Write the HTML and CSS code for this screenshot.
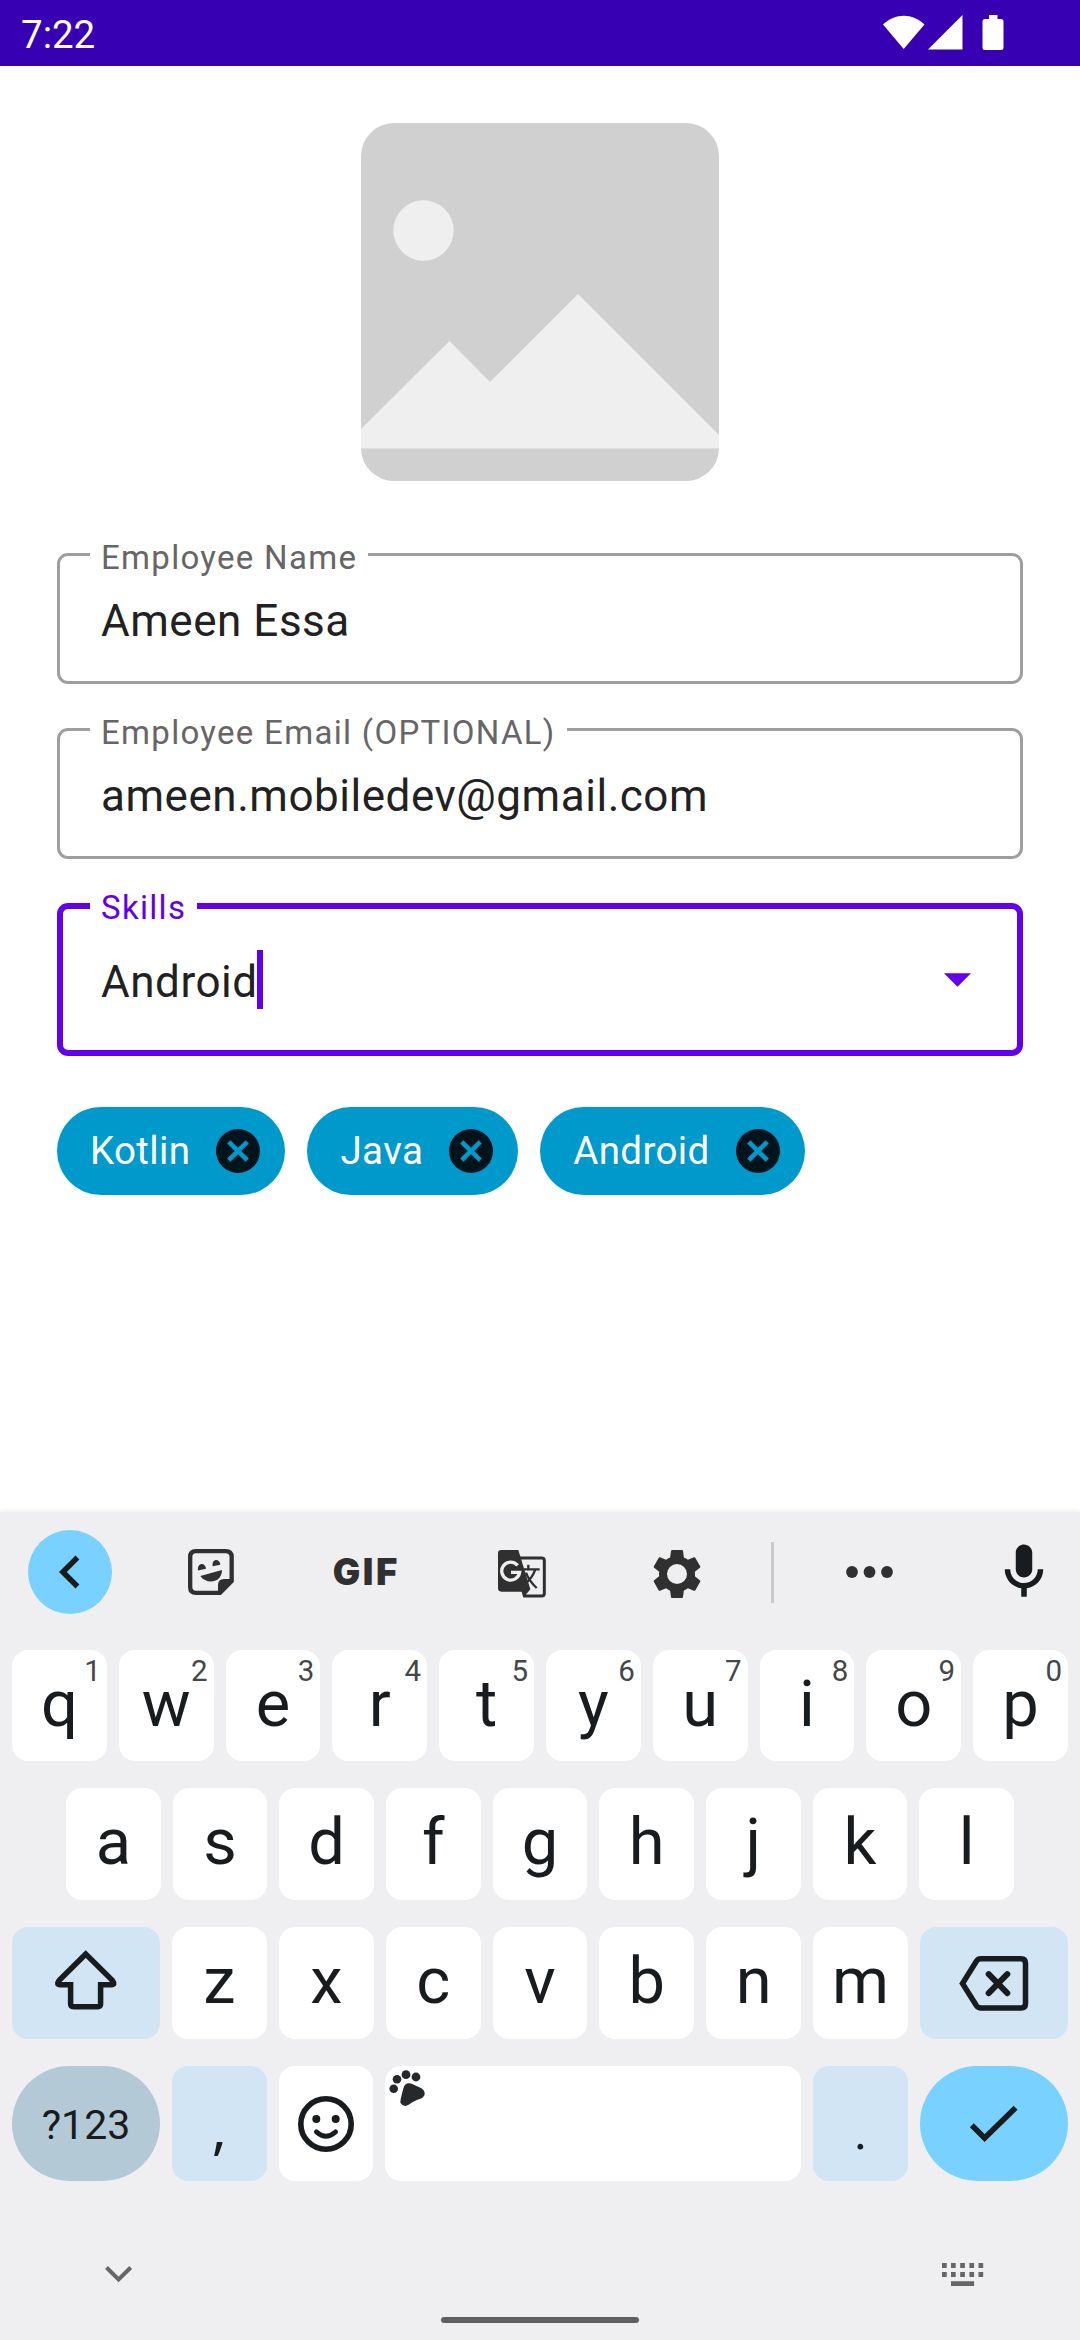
FILE: index.html
```html
<!DOCTYPE html>
<html lang="en">
<head>
<meta charset="utf-8">
<title>Employee</title>
<link rel="stylesheet" href="styles.css">
</head>
<body>
<header class="status-bar">
  <span class="clock">7:22</span>
  <svg class="status-icons" viewBox="0 0 122 38" width="122" height="38" fill="#fff">
    <path d="M0 10.5C12 -1.2 29.5 -1.2 41.5 10.5L20.7 35z"/>
    <path d="M79.5 1v34.5H45z"/>
    <path d="M106 1h8.5v4h3.5a2.5 2.5 0 0 1 2.5 2.5v26a2.5 2.5 0 0 1-2.5 2.5h-16a2.5 2.5 0 0 1-2.5-2.5v-26a2.5 2.5 0 0 1 2.5-2.5h4z"/>
  </svg>
</header>

<main class="form">
  <svg class="photo" viewBox="0 0 358 358" width="358" height="358">
    <rect width="358" height="358" fill="#d0d0d0"/>
    <circle cx="62.5" cy="107.5" r="30.2" fill="#efefef"/>
    <path d="M0 306L88.5 218 129 259 217 171 358 312v13.5H0z" fill="#efefef"/>
  </svg>

  <div class="fields">
    <div class="field">
      <label class="field-label">Employee Name</label>
      <span class="field-value">Ameen Essa</span>
    </div>
    <div class="field">
      <label class="field-label">Employee Email (OPTIONAL)</label>
      <span class="field-value">ameen.mobiledev@gmail.com</span>
    </div>
    <div class="field focused">
      <label class="field-label">Skills</label>
      <span class="field-value">Android</span>
      <span class="caret"></span>
      <svg class="dropdown" viewBox="0 0 27 14" width="27" height="14"><path d="M0 .3h27L13.5 13.8z" fill="#6200ee"/></svg>
    </div>
  </div>

  <div class="chips">
    <span class="chip">Kotlin
      <svg viewBox="2 2 20 20" width="44" height="44"><circle cx="12" cy="12" r="10" fill="#02141b"/><path d="M7.8 7.8l8.4 8.4M16.2 7.8l-8.4 8.4" stroke="#0099cc" stroke-width="2.1"/></svg>
    </span>
    <span class="chip">Java
      <svg viewBox="2 2 20 20" width="44" height="44"><circle cx="12" cy="12" r="10" fill="#02141b"/><path d="M7.8 7.8l8.4 8.4M16.2 7.8l-8.4 8.4" stroke="#0099cc" stroke-width="2.1"/></svg>
    </span>
    <span class="chip">Android
      <svg viewBox="2 2 20 20" width="44" height="44"><circle cx="12" cy="12" r="10" fill="#02141b"/><path d="M7.8 7.8l8.4 8.4M16.2 7.8l-8.4 8.4" stroke="#0099cc" stroke-width="2.1"/></svg>
    </span>
  </div>
</main>

<section class="keyboard">
  <div class="toolbar">
    <span class="back"><svg viewBox="0 0 24 24" width="66" height="66"><path d="M15.41 7.41L14 6l-6 6 6 6 1.41-1.41L10.83 12z" fill="#191c1e"/></svg></span>
    <span class="tool">
      <svg viewBox="54 57 138 138" width="46" height="46" fill="#303030">
        <path d="M78 63.5H167Q185 63.5 185 81V153L150 188.5H78Q60.5 188.5 60.5 171V81Q60.5 63.5 78 63.5z" fill="none" stroke="#303030" stroke-width="13"/>
        <path d="M144 192V165Q144 147 162 147H190z"/>
        <path d="M84 121.5C80 98 106 95 108 116z"/>
        <path d="M128 109C124 86 149 84 151 104z"/>
        <path d="M91 138L156 120C156 160 108 164 91 138z"/>
      </svg>
    </span>
    <span class="tool gif">GIF</span>
    <span class="tool low">
      <svg viewBox="57 60 144 144" width="48" height="48">
        <path d="M120 84H188Q196 84 196 92V190Q196 198 188 198H135" fill="none" stroke="#303030" stroke-width="9"/>
        <path d="M67 60H118L154 178L133 203L128 185H67Q57 185 57 175V70Q57 60 67 60z" fill="#303030"/>
        <path d="M116 106A27 27 0 1 0 122 127H96" fill="none" stroke="#efeff1" stroke-width="10"/>
        <path d="M132 118H182M148 104V118M169 118Q160 145 137 162M141 128Q150 153 173 174" fill="none" stroke="#303030" stroke-width="7"/>
      </svg>
    </span>
    <span class="tool low">
      <svg viewBox="0 0 24 24" width="60" height="60"><path d="M19.14 12.94c.04-.3.06-.61.06-.94 0-.32-.02-.64-.07-.94l2.03-1.58c.18-.14.23-.41.12-.61l-1.92-3.32c-.12-.22-.37-.29-.59-.22l-2.39.96c-.5-.38-1.03-.7-1.62-.94L14.4 2.81c-.04-.24-.24-.41-.48-.41h-3.84c-.24 0-.43.17-.47.41L9.25 5.35C8.66 5.59 8.12 5.92 7.63 6.29L5.24 5.33c-.22-.08-.47 0-.59.22L2.74 8.87C2.62 9.08 2.66 9.34 2.86 9.48l2.03 1.58C4.84 11.36 4.8 11.69 4.8 12s.02.64.07.94l-2.03 1.58c-.18.14-.23.41-.12.61l1.92 3.32c.12.22.37.29.59.22l2.39-.96c.5.38 1.03.7 1.62.94l.36 2.54c.05.24.24.41.48.41h3.84c.24 0 .44-.17.47-.41l.36-2.54c.59-.24 1.13-.56 1.62-.94l2.39.96c.22.08.47 0 .59-.22l1.92-3.32c.12-.22.07-.47-.12-.61L19.14 12.94z" fill="#303030"/><circle cx="12" cy="12" r="4" fill="#efeff1"/></svg>
    </span>
    <span class="tool-divider"></span>
    <span class="more"><svg viewBox="0 0 47 12" width="47" height="12" fill="#303030"><circle cx="6" cy="6" r="5.9"/><circle cx="23.5" cy="6" r="5.9"/><circle cx="41" cy="6" r="5.9"/></svg></span>
    <svg class="mic" viewBox="0 0 24 24" width="66" height="66"><path d="M12 14c1.66 0 3-1.34 3-3V5c0-1.66-1.34-3-3-3S9 3.34 9 5v6c0 1.66 1.34 3 3 3zm5-3c0 2.76-2.24 5-5 5s-5-2.24-5-5H5c0 3.53 2.61 6.43 6 6.92V21h2v-3.08c3.39-.49 6-3.39 6-6.92h-2z" fill="#191c1e"/></svg>
  </div>

  <div class="keys">
    <div class="row row-1">
      <span class="key">q<sup>1</sup></span><span class="key">w<sup>2</sup></span><span class="key">e<sup>3</sup></span><span class="key">r<sup>4</sup></span><span class="key">t<sup>5</sup></span><span class="key">y<sup>6</sup></span><span class="key">u<sup>7</sup></span><span class="key">i<sup>8</sup></span><span class="key">o<sup>9</sup></span><span class="key">p<sup>0</sup></span>
    </div>
    <div class="row row-2">
      <span class="key">a</span><span class="key">s</span><span class="key">d</span><span class="key">f</span><span class="key">g</span><span class="key">h</span><span class="key">j</span><span class="key">k</span><span class="key">l</span>
    </div>
    <div class="row row-3">
      <span class="key wide tinted"><svg viewBox="52 1949 68 68" width="68" height="68"><path d="M85.8 1956L59 1982.5Q56 1986.7 60 1986.7H70.6V2006Q70.6 2008.7 73.5 2008.7H97.7Q100.6 2008.7 100.6 2006V1986.7H111.5Q115.5 1986.7 112.5 1982.5z" fill="none" stroke="#191c1e" stroke-width="5.5"/></svg></span>
      <span class="key">z</span><span class="key">x</span><span class="key">c</span><span class="key">v</span><span class="key">b</span><span class="key">n</span><span class="key">m</span>
      <span class="key wide tinted"><svg viewBox="957 1949 72 68" width="72" height="68" fill="none" stroke="#191c1e"><path d="M961.500 1985.500L975.500 1963Q977 1960.800 980 1960.800H1020Q1024.500 1960.800 1024.500 1965.500V2005.500Q1024.500 2010 1020 2010H980Q977 2010 975.500 2007.800z" stroke-width="5.500"/><path d="M987.700 1976.200l18.600 19M1006.300 1976.200l-18.600 19" stroke-width="6" stroke-linecap="round"/></svg></span>
    </div>
    <div class="row row-4">
      <span class="key wide symbols">?123</span>
      <span class="key tinted comma">,</span>
      <span class="key"><svg viewBox="0 0 56 56" width="56" height="56"><circle cx="28" cy="28" r="25.2" fill="none" stroke="#191c1e" stroke-width="5.6"/><circle cx="18.3" cy="23" r="4" fill="#191c1e"/><circle cx="37.7" cy="23" r="4" fill="#191c1e"/><path d="M18.5 36Q28 44.5 37.5 36" fill="none" stroke="#191c1e" stroke-width="5" stroke-linecap="round"/></svg></span>
      <span class="key space"><svg viewBox="388 2070 37 37" width="37" height="37" fill="#26292b"><circle cx="392.7" cy="2088.7" r="4.3"/><circle cx="396" cy="2079.2" r="4.3"/><circle cx="405" cy="2074.7" r="4.4"/><circle cx="415" cy="2077" r="4.4"/><path d="M402.5 2088Q404 2082 410 2083.5L420 2088Q424.5 2091 423.5 2095Q422 2098.5 417 2099.5Q412 2101.5 408 2104.5Q403 2108 399.5 2103Q398.8 2101 402.5 2088z"/></svg></span>
      <span class="key tinted period">.</span>
      <span class="key wide enter"><svg viewBox="966 2100 56 48" width="56" height="48"><path d="M971.8 2125.3L984.6 2138 1015.6 2107.7" fill="none" stroke="#191c1e" stroke-width="5.6"/></svg></span>
    </div>
  </div>

  <div class="nav">
    <svg viewBox="105 2263 28 22" width="28" height="22"><path d="M106.5 2267.5L118.6 2279.5 130.7 2267.5" fill="none" stroke="#666" stroke-width="4"/></svg>
    <svg viewBox="0 0 42 23" width="42" height="23" fill="#666"><path d="M0 0h4.7v5H0zM9 0h4.7v5H9zM18.2 0h4.7v5h-4.7zM27.4 0h4.7v5h-4.7zM36.5 0h4.7v5h-4.7zM0 9h4.7v5H0zM9 9h4.7v5H9zM18.2 9h4.7v5h-4.7zM27.4 9h4.7v5h-4.7zM36.5 9h4.7v5h-4.7zM9 18.2h23.1V23H9z"/></svg>
  </div>
  <div class="home-bar"></div>
</section>
</body>
</html>
```
FILE: styles.css
```css
* { box-sizing: border-box; }

body {
  margin: 0;
  width: 1080px;
  height: 2340px;
  display: flex;
  flex-direction: column;
  background: #fff;
  font-family: Roboto, "Noto Sans", sans-serif;
  overflow: hidden;
}

svg { display: block; flex: none; }

.status-bar {
  height: 66px;
  padding: 0 75px 0 21px;
  display: flex;
  align-items: center;
  justify-content: space-between;
  background: #3700b3;
  color: #fff;
}
.clock { font-size: 38.5px; line-height: 46px; padding-top: 3px; }

.form {
  flex: 1;
  padding: 57px 57px 0;
  display: flex;
  flex-direction: column;
}
.photo { align-self: center; border-radius: 33px; }

.fields {
  margin-top: 72px;
  display: flex;
  flex-direction: column;
  gap: 44px;
}
.field {
  position: relative;
  height: 131px;
  padding: 40px 41px 0;
  border: 3px solid #9e9e9e;
  border-radius: 11px;
  display: flex;
  align-items: flex-start;
}
.field-label {
  position: absolute;
  left: 30px;
  top: -18px;
  padding: 0 11px;
  background: #fff;
  color: #666;
  font-size: 33px;
  line-height: 40px;
  letter-spacing: 1.3px;
  white-space: nowrap;
}
.field-value {
  color: #212121;
  font-size: 44px;
  line-height: 50px;
  letter-spacing: 0.53px;
}
.focused {
  height: 153px;
  padding: 48px 46px 0 38px;
  border: 6px solid #6200ee;
}
.focused .field-label { left: 27px; top: -21px; color: #6200ee; }
.caret { width: 6px; height: 59px; margin: -7px 0 0 -1px; background: #6200ee; }
.dropdown { margin: 16px 0 0 auto; }

.chips { margin-top: 51px; display: flex; gap: 22px; }
.chip {
  height: 88px;
  padding: 0 25px 0 33px;
  border-radius: 44px;
  display: flex;
  align-items: center;
  gap: 26px;
  background: #0099cc;
  color: #fff;
  font-size: 38.5px;
  line-height: 44px;
  padding-bottom: 1px;
  letter-spacing: 0.38px;
}

.keyboard {
  height: 828px;
  display: flex;
  flex-direction: column;
  background: #efeff1;
  box-shadow: 0 -1px 5px rgba(0, 0, 0, 0.08);
  color: #191c1e;
}
.toolbar {
  height: 120px;
  margin-bottom: 18px;
  padding-left: 28px;
  display: flex;
  align-items: center;
}
.back {
  width: 84px;
  height: 84px;
  margin-right: 21px;
  border-radius: 50%;
  background: #79d1ff;
  display: flex;
  align-items: center;
  padding-left: 9px;
}
.tool { width: 155.5px; display: flex; justify-content: center; }
.low { padding-top: 4px; }
.gif {
  font: 900 36.5px/40px Inter, Roboto, sans-serif;
  letter-spacing: 2.5px;
  color: #303030;
}
.tool-divider { width: 3px; height: 61px; margin-left: 16px; background: #c9c9cb; }
.more { width: 191px; display: flex; justify-content: center; }
.mic { margin-left: 26px; }

.keys { padding: 0 12px; display: flex; flex-direction: column; }
.row { display: flex; gap: 12px; height: 112px; margin-bottom: 27px; }
.row-1 { height: 111px; }
.row-2 { padding: 0 54px; }
.row-4 { height: 115px; margin-bottom: 0; }
.key {
  position: relative;
  flex: 1 1 0;
  border-radius: 16px;
  background: #fff;
  display: flex;
  align-items: center;
  justify-content: center;
  font-size: 65px;
  line-height: 108px;
  padding-bottom: 4px;
}
.key sup {
  position: absolute;
  right: 6px;
  top: 6px;
  font-size: 29.5px;
  font-weight: 400;
  line-height: 30px;
  color: #44474a;
}
.wide { flex: 0 0 148px; }
.tinted { background: #d2e5f4; }
.row-4 .key { padding-bottom: 0; }
.row-4 .symbols {
  border-radius: 58px;
  background: #b4c9d6;
  font-size: 41px;
  padding-top: 3px;
}
.row-4 .comma { font-family: "Noto Sans", sans-serif; font-size: 56px; padding-top: 6px; }
.row-4 .period { font-size: 52px; padding-top: 16px; }
.row-4 .space {
  flex: 0 0 416px;
  align-items: flex-start;
  justify-content: flex-start;
  padding: 4px;
}
.row-4 .enter { border-radius: 58px; background: #79d1ff; }

.nav {
  height: 40px;
  margin-top: 73px;
  padding: 0 96px 0 105px;
  display: flex;
  align-items: center;
  justify-content: space-between;
}
.home-bar {
  width: 198px;
  height: 6px;
  margin: 23px auto 0;
  border-radius: 3px;
  background: #606060;
}
```
